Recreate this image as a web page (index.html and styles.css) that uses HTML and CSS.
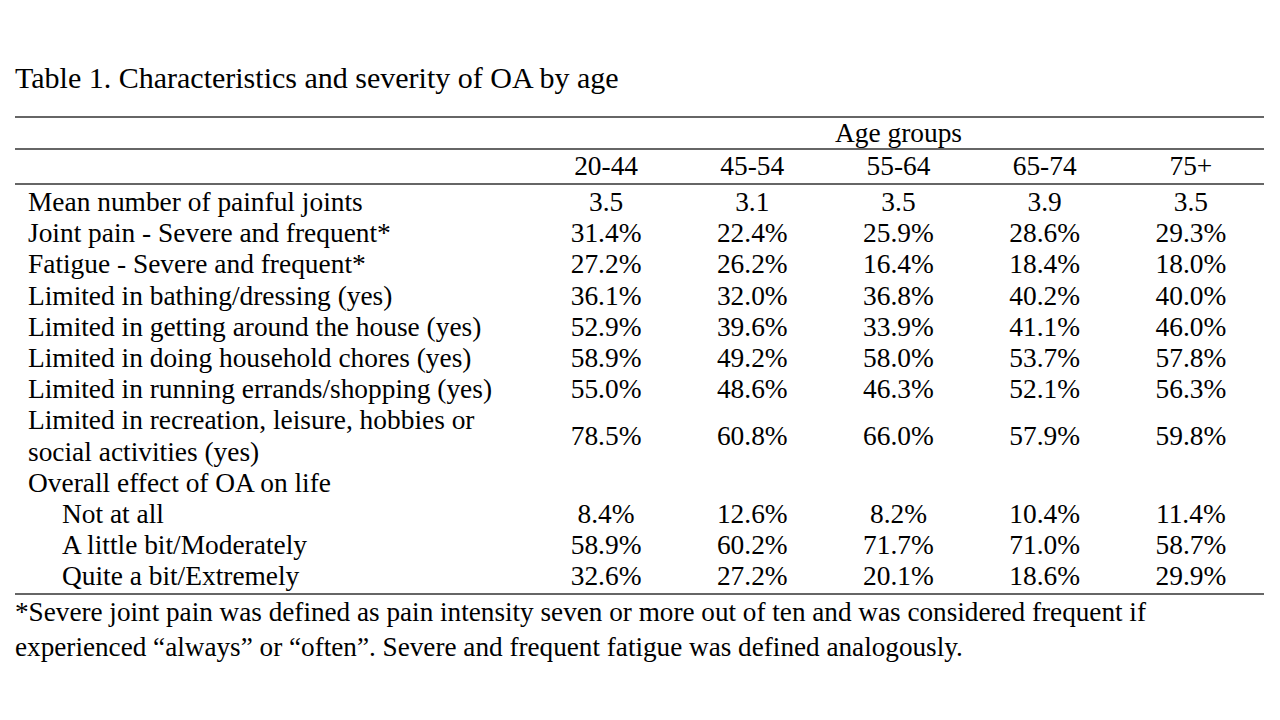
FILE: index.html
```html
<!DOCTYPE html>
<html lang="en">
<head>
<meta charset="utf-8">
<title>Table 1</title>
<link rel="stylesheet" href="styles.css">
</head>
<body>
<div class="page">
  <h1 class="caption">Table 1. Characteristics and severity of OA by age</h1>
  <table class="data">
    <thead>
      <tr class="group-row">
        <th class="label"></th>
        <th colspan="5" class="group">Age groups</th>
      </tr>
      <tr class="col-row">
        <th class="label"></th>
        <th>20-44</th>
        <th>45-54</th>
        <th>55-64</th>
        <th>65-74</th>
        <th>75+</th>
      </tr>
    </thead>
    <tbody>
      <tr class="first"><td class="label">Mean number of painful joints</td><td>3.5</td><td>3.1</td><td>3.5</td><td>3.9</td><td>3.5</td></tr>
      <tr><td class="label">Joint pain - Severe and frequent*</td><td>31.4%</td><td>22.4%</td><td>25.9%</td><td>28.6%</td><td>29.3%</td></tr>
      <tr><td class="label">Fatigue - Severe and frequent*</td><td>27.2%</td><td>26.2%</td><td>16.4%</td><td>18.4%</td><td>18.0%</td></tr>
      <tr><td class="label">Limited in bathing/dressing (yes)</td><td>36.1%</td><td>32.0%</td><td>36.8%</td><td>40.2%</td><td>40.0%</td></tr>
      <tr><td class="label">Limited in getting around the house (yes)</td><td>52.9%</td><td>39.6%</td><td>33.9%</td><td>41.1%</td><td>46.0%</td></tr>
      <tr><td class="label">Limited in doing household chores (yes)</td><td>58.9%</td><td>49.2%</td><td>58.0%</td><td>53.7%</td><td>57.8%</td></tr>
      <tr><td class="label">Limited in running errands/shopping (yes)</td><td>55.0%</td><td>48.6%</td><td>46.3%</td><td>52.1%</td><td>56.3%</td></tr>
      <tr><td class="label">Limited in recreation, leisure, hobbies or<br>social activities (yes)</td><td>78.5%</td><td>60.8%</td><td>66.0%</td><td>57.9%</td><td>59.8%</td></tr>
      <tr><td class="label">Overall effect of OA on life</td><td></td><td></td><td></td><td></td><td></td></tr>
      <tr><td class="label sub">Not at all</td><td>8.4%</td><td>12.6%</td><td>8.2%</td><td>10.4%</td><td>11.4%</td></tr>
      <tr><td class="label sub">A little bit/Moderately</td><td>58.9%</td><td>60.2%</td><td>71.7%</td><td>71.0%</td><td>58.7%</td></tr>
      <tr><td class="label sub">Quite a bit/Extremely</td><td>32.6%</td><td>27.2%</td><td>20.1%</td><td>18.6%</td><td>29.9%</td></tr>
    </tbody>
  </table>
  <p class="note">*Severe joint pain was defined as pain intensity seven or more out of ten and was considered frequent if experienced “always” or “often”. Severe and frequent fatigue was defined analogously.</p>
</div>
</body>
</html>
```
FILE: styles.css
```css
html, body {
  margin: 0;
  padding: 0;
  background: #ffffff;
}

.page {
  width: 1280px;
  height: 720px;
  padding: 60px 16px 0 15px;
  box-sizing: border-box;
  font-family: "Liberation Serif", "Times New Roman", serif;
  color: #000;
}

.caption {
  margin: 0;
  font-size: 30px;
  font-weight: normal;
  line-height: 36px;
  height: 56px;
}

.data {
  width: 1249px;
  border-collapse: collapse;
  border-top: 2px solid #666;
  border-bottom: 2px solid #666;
  font-size: 27.4px;
  table-layout: fixed;
}

.data th,
.data td {
  padding: 0;
  font-weight: normal;
  text-align: center;
  vertical-align: middle;
  line-height: 31.2px;
}

.data th.label,
.data td.label {
  width: 505px;
  text-align: left;
  padding-left: 13px;
}

.data td.sub {
  padding-left: 47px;
}

.group-row th {
  height: 30px;
  line-height: 30px;
  border-bottom: 2px solid #666;
}

.col-row th {
  height: 31px;
  line-height: 33px;
  border-bottom: 2px solid #666;
}

.data tr.first td {
  padding-top: 2px;
}

.note {
  margin: 0;
  font-size: 27.2px;
  line-height: 35px;
}
```
